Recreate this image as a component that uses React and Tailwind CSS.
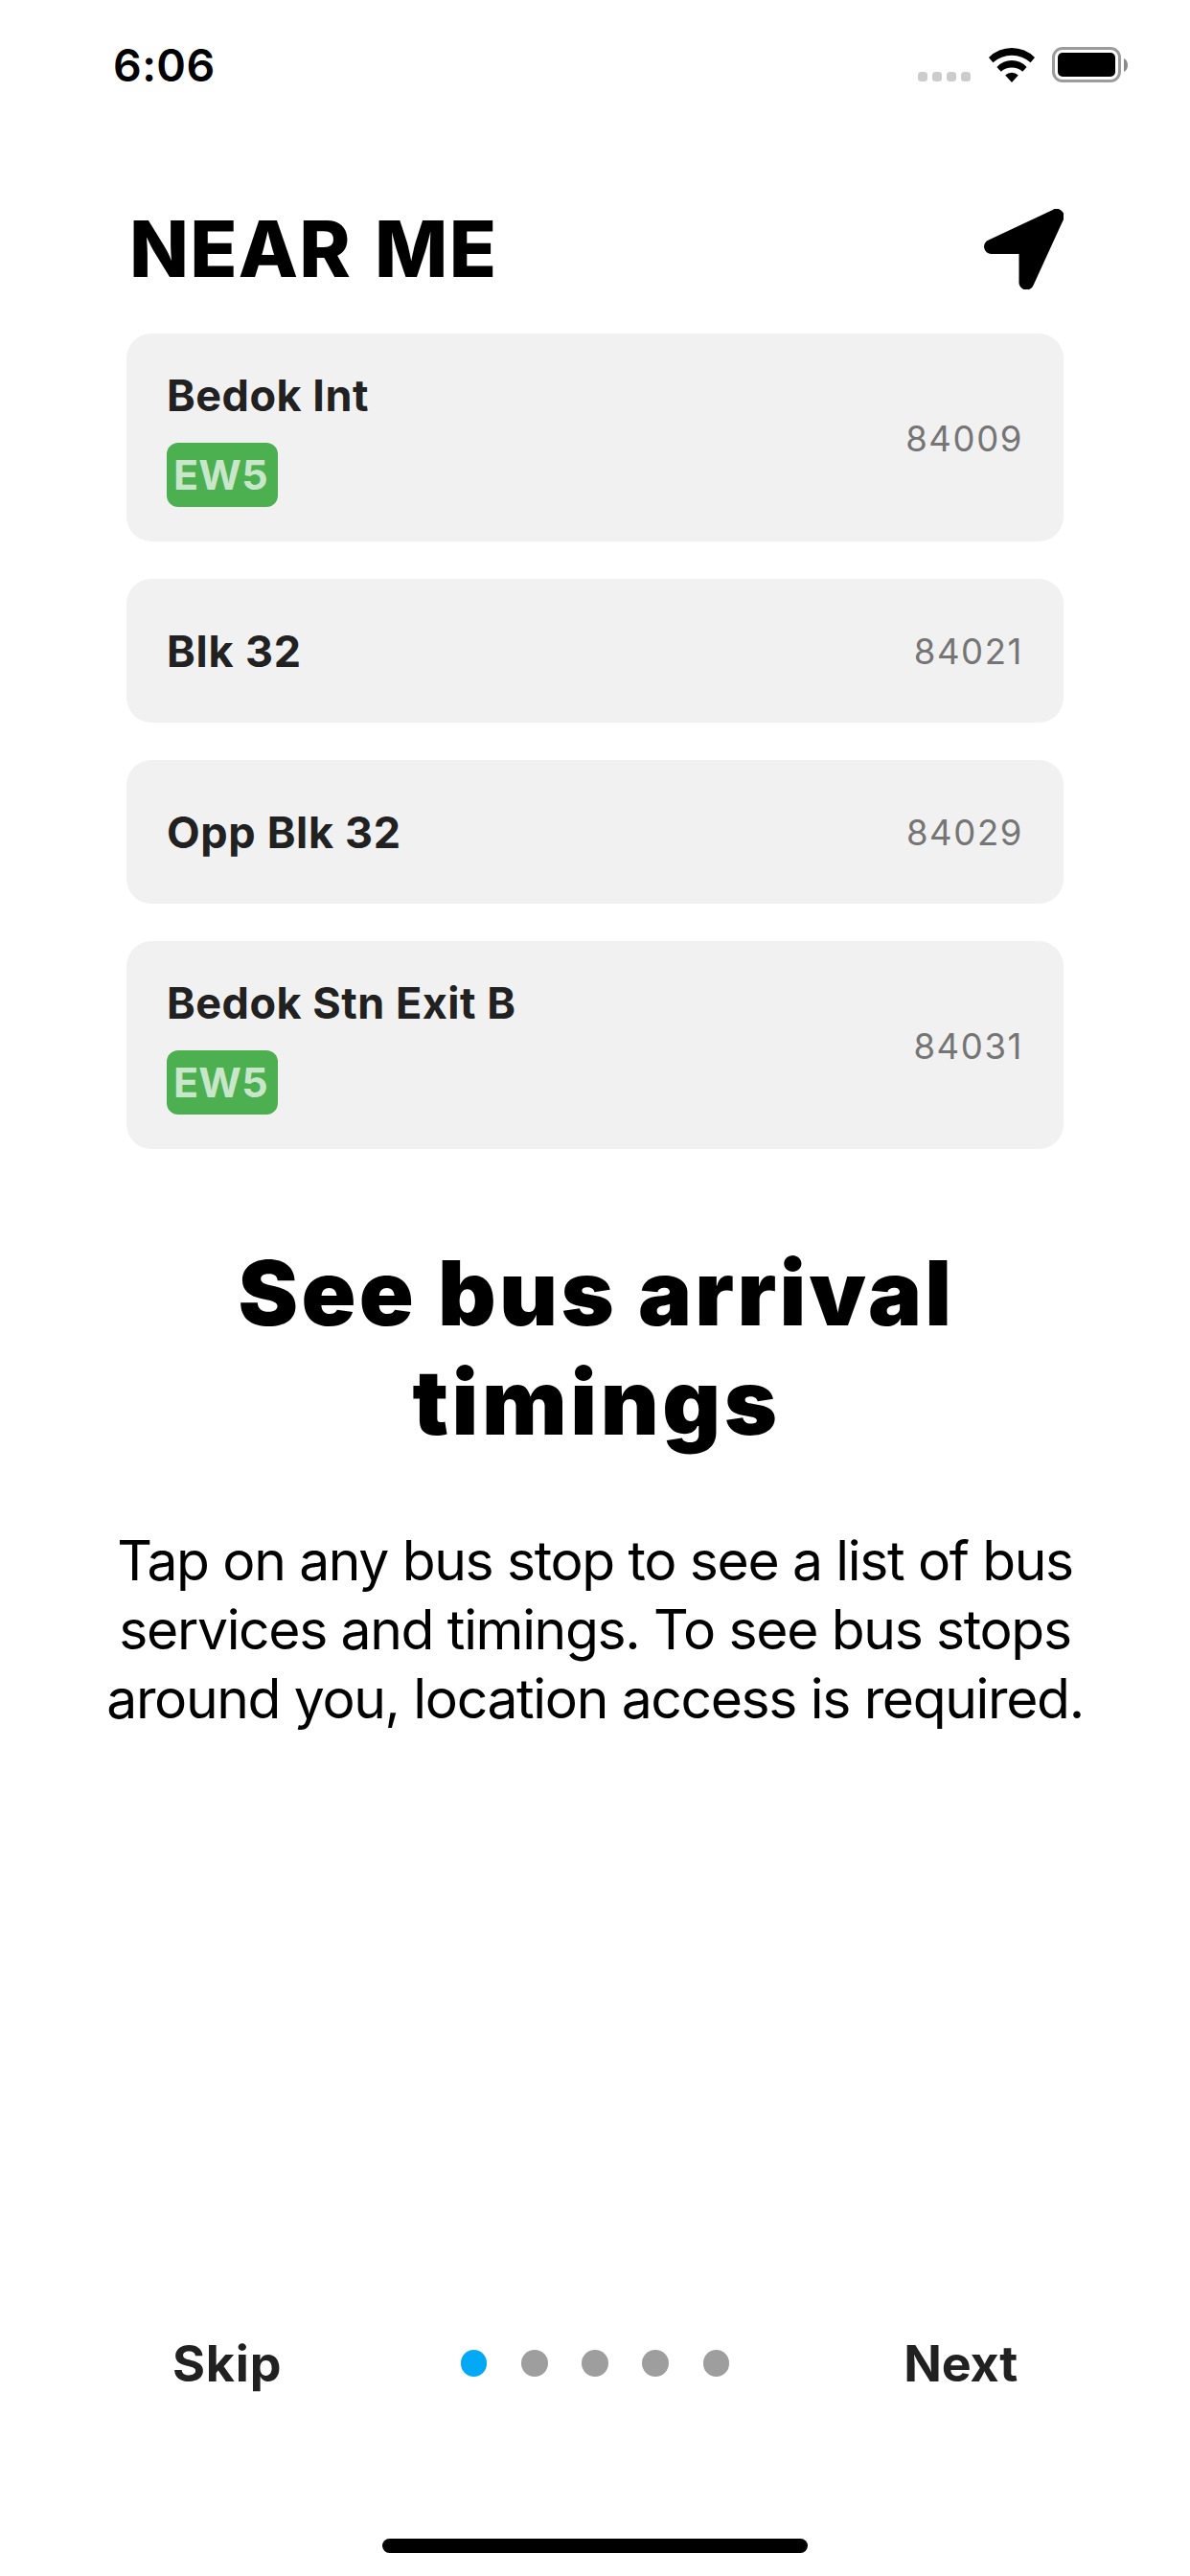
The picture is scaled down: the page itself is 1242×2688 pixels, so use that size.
const stops = [
  { name: "Bedok Int", code: "84009", station: "EW5", spacing: "tracking-[0.5px]" },
  { name: "Blk 32", code: "84021", spacing: "tracking-[0.8px]" },
  { name: "Opp Blk 32", code: "84029", spacing: "tracking-[0.65px]" },
  { name: "Bedok Stn Exit B", code: "84031", station: "EW5", spacing: "tracking-[0.5px]" },
];

function WifiIcon() {
  return (
    <svg className="h-[36px] w-[48px]" viewBox="0 0 48 36" fill="currentColor">
      <path d="M0 10A33.8 33.8 0 0 1 48 10L43.6 15.3A29.5 29.5 0 0 0 4.4 15.3Z" />
      <path d="M8.4 20A20.9 20.9 0 0 1 39.6 20L35.2 24.8A17 17 0 0 0 12.8 24.8Z" />
      <path d="M17.2 28.5A9.5 9.5 0 0 1 30.8 28.5L24 36Z" />
    </svg>
  );
}

function NavigationIcon() {
  return (
    <svg className="h-[84px] w-[83px]" viewBox="0 0 83 84" fill="currentColor">
      <path d="M5.2 32.2L71.8 0.9A8 8 0 0 1 82.4 12.2L51.6 79.4A7.8 7.8 0 0 1 36.5 76V47H7.6A7.6 7.6 0 0 1 5.2 32.2Z" />
    </svg>
  );
}

function StatusBar() {
  return (
    <header className="flex h-[137px] items-center justify-between pr-[65px] pl-[118px]">
      <span className="text-[46.5px] leading-none font-semibold tracking-[0.4px]">6:06</span>
      <div className="mb-[2px] flex h-[37px] items-center">
        <div className="mb-[1px] flex gap-[5px] self-end">
          {[0, 1, 2, 3].map((i) => (
            <span key={i} className="size-[10px] rounded-[3.5px] bg-[#cccccc]" />
          ))}
        </div>
        <div className="ml-[19px]">
          <WifiIcon />
        </div>
        <div className="ml-[18px] h-[37px] w-[72px] rounded-[11px] border-3 border-[#9b9b9b] p-[3px]">
          <div className="h-full rounded-[5px] bg-black" />
        </div>
        <svg className="ml-[3px] h-[14px] w-[4px]" viewBox="0 0 4 14" fill="#8a8a8a">
          <path d="M0 0C5.3 2.4 5.3 11.6 0 14Z" />
        </svg>
      </div>
    </header>
  );
}

function StopCard({ stop }) {
  const shape = stop.station ? "h-[217px]" : "h-[150px]";
  return (
    <li className={`flex items-center justify-between rounded-[26px] bg-[#f1f1f1] pr-[42px] pl-[42px] ${shape}`}>
      <div>
        <p className={`text-[45px] leading-[55px] font-bold text-[#212121] ${stop.spacing}`}>{stop.name}</p>
        {stop.station && (
          <span className="mt-[22px] flex h-[67px] w-[116px] items-center rounded-[12px] bg-[#4caf50] pl-[7px] text-[43px] leading-none font-bold tracking-[0.2px] text-[#c8e6c9]">
            {stop.station}
          </span>
        )}
      </div>
      <span className="pt-[3px] text-[36.5px] leading-none tracking-[1.6px] text-[#757575]">{stop.code}</span>
    </li>
  );
}

export default function App() {
  return (
    <div className="flex h-[2688px] w-[1242px] flex-col bg-white font-['Inter','Liberation_Sans',sans-serif] text-black">
      <StatusBar />

      <section className="px-[132px] pt-[81px]">
        <div className="flex h-[84px] items-center justify-between">
          <h1 className="pl-[3px] text-[81px] leading-none font-extrabold tracking-[1.2px] [word-spacing:5px]">NEAR ME</h1>
          <NavigationIcon />
        </div>
        <ul className="mt-[46px] flex flex-col gap-[39px]">
          {stops.map((stop) => (
            <StopCard key={stop.code} stop={stop} />
          ))}
        </ul>
      </section>

      <section className="text-center whitespace-nowrap">
        <h2 className="mt-[93px] pl-[3px] text-[94px] leading-[114px] font-black">
          <span className="block tracking-[3.3px]">See bus arrival</span>
          <span className="block tracking-[3.6px]">timings</span>
        </h2>
        <p className="mt-[73px] text-[57px] leading-[72px] tracking-[-1.35px]">
          <span className="block">Tap on any bus stop to see a list of bus</span>
          <span className="block">services and timings. To see bus stops</span>
          <span className="block">around you, location access is required.</span>
        </p>
      </section>

      <footer className="mt-auto">
        <div className="grid h-[62px] grid-cols-[1fr_auto_1fr] items-center px-[180px] text-[52px] leading-[62px] font-bold text-[#212121]">
          <button className="justify-self-start tracking-[0.8px]">Skip</button>
          <div className="flex gap-[35.7px] pb-[2px]">
            <span className="size-[27.5px] rounded-full bg-[#03a9f4]" />
            {[1, 2, 3, 4].map((i) => (
              <span key={i} className="size-[27.5px] rounded-full bg-[#9e9e9e]" />
            ))}
          </div>
          <button className="justify-self-end tracking-[-0.2px]">Next</button>
        </div>
        <div className="mx-auto mt-[151px] mb-[24px] h-[15px] w-[444px] rounded-full bg-black" />
      </footer>
    </div>
  );
}
